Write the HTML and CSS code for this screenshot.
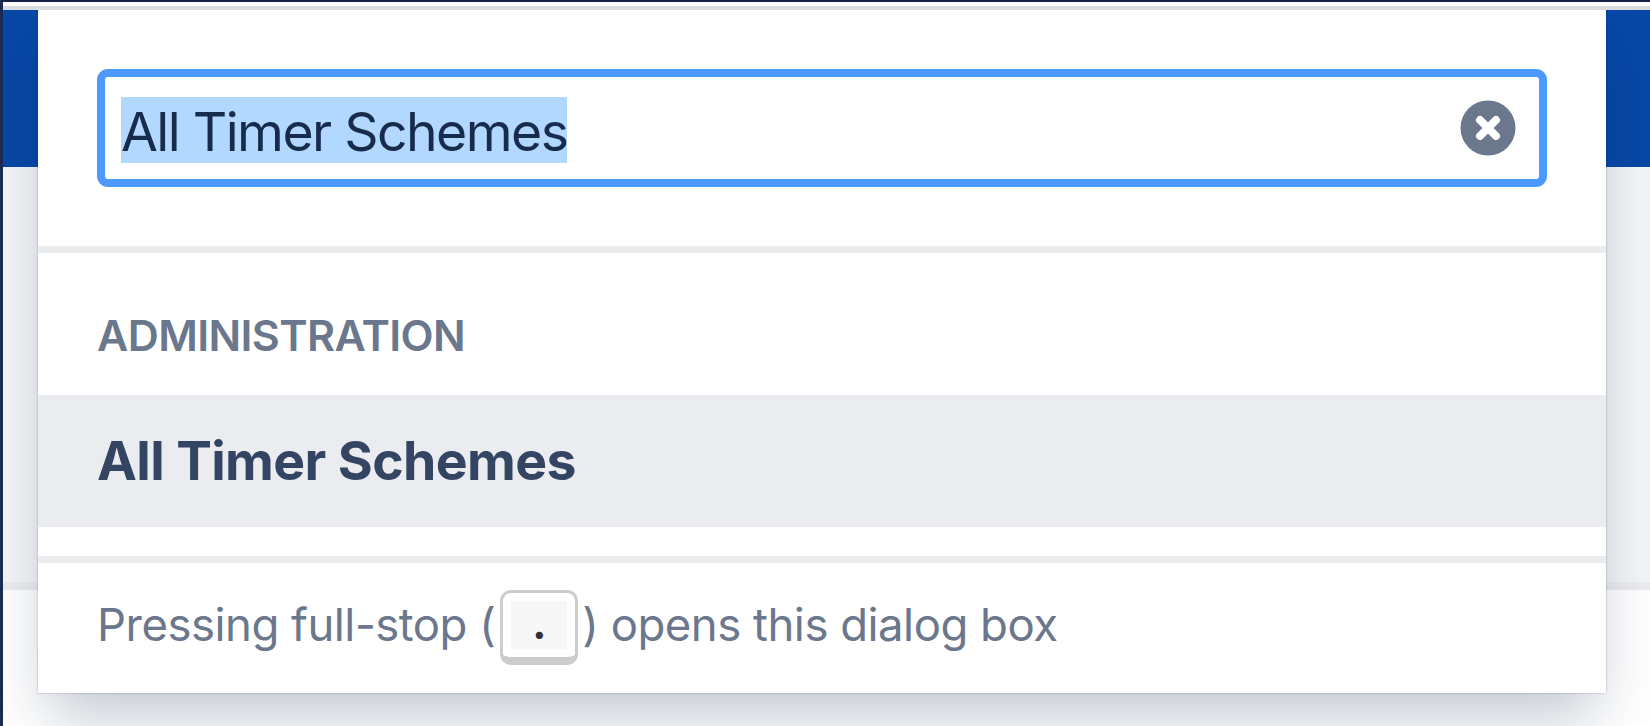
FILE: index.html
```
<!DOCTYPE html>
<html lang="en">
  <head>
    <meta charset="UTF-8" />
    <meta name="viewport" content="width=device-width, initial-scale=1.0" />
    <title>Administration search</title>
    <link rel="stylesheet" href="styles.css">
  </head>
  <body>
    <div class="page">
      <div class="top-line"></div>
      <div class="header"></div>
      <div class="subheader"></div>
      <div class="content"></div>
    </div>

    <div class="dialog" role="dialog">
      <div class="search">
        <div class="search-field">
          <span class="query">All Timer Schemes</span>
          <svg class="clear-icon" viewBox="0 0 56 56">
            <circle cx="28" cy="28" r="27.5" fill="#6b778c" />
            <path d="M20 20 L36 36 M36 20 L20 36" stroke="#fff" stroke-width="8" stroke-linecap="round" />
          </svg>
        </div>
      </div>
      <div class="results">
        <h4 class="group-title">Administration</h4>
        <div class="result active"><span class="result-name">All Timer Schemes</span></div>
      </div>
      <div class="hint">
        <span class="hint-start">Pressing full-stop (</span>
        <kbd class="key"><span class="key-face">.</span></kbd>
        <span class="hint-end">) opens this dialog box</span>
      </div>
    </div>
  </body>
</html>
```

FILE: styles.css
```
* {
  box-sizing: border-box;
  margin: 0;
  padding: 0;
}
body {
  width: 1650px;
  height: 726px;
  overflow: hidden;
  background: #fff;
  font-family: Inter, 'Liberation Sans', sans-serif;
}
.page {
  height: 726px;
  border-top: 2px solid #142344;
  border-left: 3px solid #1c2b52;
}
.top-line {
  height: 8px;
  border-bottom: 4px solid #d9dbdc;
}
.header {
  height: 157px;
  background: #0747a6;
}
.subheader {
  height: 423px;
  background: #f4f5f7;
  border-bottom: 8px solid #ebecf0;
}
.content {
  background: #fff;
}
.dialog {
  position: absolute;
  top: 10px;
  left: 38px;
  width: 1568px;
  height: 683px;
  background: #fff;
  box-shadow: 0 0 2px rgba(9, 30, 66, 0.31), 0 32px 56px -10px rgba(9, 30, 66, 0.25);
  clip-path: inset(0 -60px -60px -35px);
}
.search {
  height: 243px;
  padding: 59px 59px 0 59px;
  border-bottom: 7px solid #ebecee;
}
.search-field {
  display: flex;
  align-items: center;
  justify-content: space-between;
  height: 118px;
  padding: 0 23px 0 16px;
  border: 8px solid #4c9aff;
  border-radius: 11px;
}
.query {
  height: 66px;
  margin-top: 3px;
  line-height: 70px;
  background: #b3d8ff;
  color: #172b4d;
  font-size: 53.5px;
  letter-spacing: -1.54px;
  white-space: nowrap;
}
.clear-icon {
  width: 56px;
  height: 56px;
}
.results {
  height: 310px;
  padding-top: 57px;
  border-bottom: 7px solid #ebecee;
}
.group-title {
  height: 85px;
  padding-left: 59px;
  line-height: 50px;
  color: #6b778c;
  font-size: 43px;
  font-weight: 600;
  letter-spacing: -0.6px;
  text-transform: uppercase;
}
.result {
  height: 132px;
  padding-left: 59px;
  line-height: 132px;
  color: #344563;
  font-size: 53.5px;
  font-weight: 700;
  letter-spacing: -0.62px;
}
.result.active {
  background: #ebecf0;
}
.hint {
  display: flex;
  height: 130px;
  padding: 27px 0 0 59px;
  line-height: 70px;
  color: #6b778c;
  font-size: 45.5px;
  white-space: nowrap;
}
.hint-start,
.hint-end {
  letter-spacing: -0.5px;
}
.key {
  width: 78px;
  height: 75px;
  margin: 0 4px 0 5px;
  padding: 8px;
  border: 3px solid #ccc;
  border-bottom-width: 8px;
  border-radius: 11px;
}
.key-face {
  display: block;
  height: 48px;
  background: #f7f7f7;
  color: #333;
  font-family: Inter, 'Liberation Sans', sans-serif;
  font-size: 46px;
  font-weight: 600;
  line-height: 42px;
  text-align: center;
}
```
